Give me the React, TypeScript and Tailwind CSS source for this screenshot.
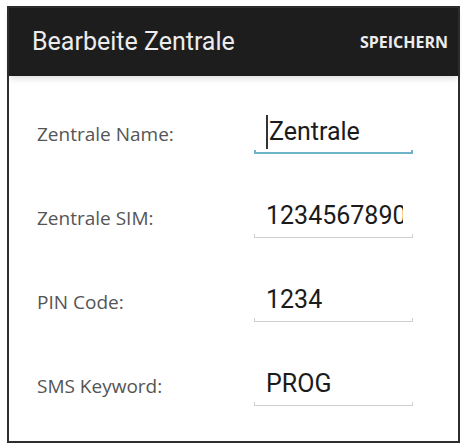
const fields = [
  { label: 'Zentrale Name:', value: 'Zentrale', focused: true },
  { label: 'Zentrale SIM:', value: '1234567890' },
  { label: 'PIN Code:', value: '1234' },
  { label: 'SMS Keyword:', value: 'PROG' },
]

function Field({ label, value, focused }: { label: string; value: string; focused?: boolean }) {
  return (
    <div className="flex h-[84px] items-center">
      <div className="w-[245px] pl-[28px] text-[19px] text-[#555]">{label}</div>
      <div className="flex h-[40px] w-[159px] flex-col">
        <div className="flex flex-1 items-center pl-[12px] pr-[10px]">
          {focused && <span className="mr-[1px] h-[34px] w-[2px] shrink-0 bg-[#333]" />}
          <div className="min-w-0 flex-1 overflow-hidden whitespace-nowrap font-['Roboto',sans-serif] text-[25px] leading-[32px] text-[#1b1b1b]">
            {value}
          </div>
        </div>
        <div
          className={
            focused
              ? 'h-[4px] border-x-2 border-b-2 border-[#6db4c8]'
              : 'h-[4px] border-x border-b border-[#cfcfcf]'
          }
        />
      </div>
    </div>
  )
}

export default function App() {
  return (
    <div className="h-[443px] w-[462px] bg-white pl-[7px] pt-[6px] font-['Open_Sans',sans-serif]">
      <div className="flex h-[437px] w-[453px] flex-col border-2 border-[#2e2e2e] bg-white">
        <header className="relative z-10 flex h-[68px] shrink-0 items-center justify-between bg-[#1d1d1d] pl-[23px] pr-[10px] shadow-[0_3px_6px_rgba(0,0,0,0.12)]">
          <h1 className="font-['Roboto',sans-serif] text-[25px] text-[#ececec]">Bearbeite Zentrale</h1>
          <button className="text-[16px] font-bold text-[#ececec]">SPEICHERN</button>
        </header>
        <div className="pt-[16px]">
          {fields.map((f) => (
            <Field key={f.label} {...f} />
          ))}
        </div>
      </div>
    </div>
  )
}
